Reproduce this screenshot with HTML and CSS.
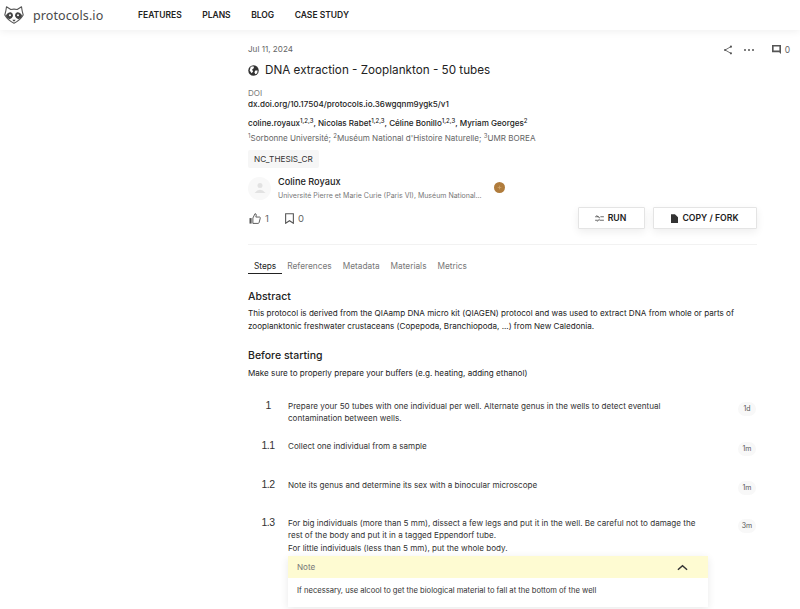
FILE: index.html
```html
<!DOCTYPE html>
<html lang="en">
<head>
    <meta charset="UTF-8">
    <meta name="viewport" content="width=device-width, initial-scale=1.0">
    <title>DNA extraction - Zooplankton - 50 tubes</title>
    <link rel="stylesheet" href="styles.css">
</head>
<body>
    <header class="topbar">
        <a class="brand">
            <svg class="brand-icon" viewBox="0 0 20 18" width="20" height="18">
                <path d="M2.500 .8 L6.800 3.500 Q10 2.800 13.200 3.500 L17.500 .8 Q18 5 19.200 9 Q16 14.500 10 17.200 Q4 14.500 .8 9 Q2 5 2.500 .8 Z" fill="#fff" stroke="#555" stroke-width="1.100" stroke-linejoin="round"/>
                <path d="M1.800 10 Q3.500 6 7 6.300 Q9.300 7.300 9 10 Q8 13 5.500 13.300 Q3 12.500 1.800 10 Z M18.200 10 Q16.500 6 13 6.300 Q10.700 7.300 11 10 Q12 13 14.500 13.300 Q17 12.500 18.200 10 Z" fill="#444"/>
                <path d="M8.300 13.800 H11.700 L10 15.800 Z" fill="#444"/>
                <circle cx="6" cy="9.300" r="1" fill="#fff"/>
                <circle cx="14" cy="9.300" r="1" fill="#fff"/>
            </svg>
            <span class="brand-name">protocols.io</span>
        </a>
        <nav class="nav">
            <a>FEATURES</a>
            <a>PLANS</a>
            <a>BLOG</a>
            <a>CASE STUDY</a>
        </nav>
    </header>

    <main class="page">
        <div class="date-row">
            <span class="date">Jul 11, 2024</span>
            <div class="actions">
                <svg viewBox="0 0 12 12" width="10" height="10"><path d="M9.500 2 L2.500 6 L9.500 10" fill="none" stroke="#555" stroke-width="1"/><circle cx="9.500" cy="2" r="1.300" fill="#555"/><circle cx="2.500" cy="6" r="1.300" fill="#555"/><circle cx="9.500" cy="10" r="1.300" fill="#555"/></svg>
                <span class="more">
                    <i></i><i></i><i></i>
                </span>
                <span class="comments">
                    <svg viewBox="0 0 10 10" width="9" height="9"><path d="M0 0 H10 V10 L8 8 H0 Z M1.800 1.800 V6.200 H8.200 V1.800 Z" fill="#555" fill-rule="evenodd"/></svg>
                    0
                </span>
            </div>
        </div>

        <h1 class="title">
            <svg viewBox="0 0 12 12" width="11" height="11"><circle cx="6" cy="6" r="5.700" fill="#333"/><path d="M3 2 L6 1.300 L6.500 3.300 L4.500 4.800 L5.500 7 L4 9 L1.800 6 Z M8 6 L10.500 6 L10 9 L8 10 L7 8 Z" fill="#fff"/></svg>
            DNA extraction - Zooplankton - 50 tubes
        </h1>

        <div class="doi-label">DOI</div>
        <div class="doi">dx.doi.org/10.17504/protocols.io.36wgqnm9ygk5/v1</div>
        <div class="authors">coline.royaux<sup>1,2,3</sup>, Nicolas Rabet<sup>1,2,3</sup>, Céline Bonillo<sup>1,2,3</sup>, Myriam Georges<sup>2</sup></div>
        <div class="affil"><sup>1</sup>Sorbonne Université; <sup>2</sup>Muséum National d'Histoire Naturelle; <sup>3</sup>UMR BOREA</div>

        <div class="tag">NC_THESIS_CR</div>

        <div class="creator">
            <div class="avatar">
                <svg viewBox="0 0 20 20" width="20" height="20"><circle cx="10" cy="7.500" r="2.500" fill="#e2e2e2"/><path d="M4.500 15 Q10 8.500 15.500 15 Z" fill="#e2e2e2"/></svg>
            </div>
            <div class="creator-text">
                <div class="creator-name">Coline Royaux</div>
                <div class="creator-org">Université Pierre et Marie Curie (Paris VI), Muséum National...</div>
            </div>
            <span class="medal">
                <svg viewBox="0 0 10 10" width="5" height="5"><path d="M5 0 L6.200 3.800 L10 5 L6.200 6.200 L5 10 L3.800 6.200 L0 5 L3.800 3.800 Z" fill="#cfa368"/></svg>
            </span>
        </div>

        <div class="stats-row">
            <div class="stats">
                <span class="stat">
                    <svg viewBox="0 0 14 13" width="12" height="11"><path d="M.5 6 H3 V12.500 H.5 Z" fill="#555"/><path d="M4.500 6 L7 .8 Q8.500 .8 8.500 2.500 L8 4.800 H12.500 Q13.500 5 13.200 6.200 L11.800 11.500 Q11.500 12.300 10.500 12.300 H4.500 Z" fill="none" stroke="#555" stroke-width="1.100"/></svg>
                    1
                </span>
                <span class="stat">
                    <svg viewBox="0 0 10 12" width="9" height="11"><path d="M.7 .7 H9.300 V11.300 L5 8.500 L.7 11.300 Z" fill="none" stroke="#555" stroke-width="1.200"/></svg>
                    0
                </span>
            </div>
            <div class="buttons">
                <button class="btn btn-run">
                    <svg viewBox="0 0 10 8" width="9" height="7"><path d="M0 2 H4 M6 2 H10 M0 6 H3 M5 6 H10 M1.500 .5 L5.500 3.500 M2.500 7.500 L5 4.500" fill="none" stroke="#444" stroke-width=".9"/></svg>
                    RUN
                </button>
                <button class="btn btn-copy">
                    <svg viewBox="0 0 8 10" width="7" height="9"><path d="M0 0 H4.500 L8 3.500 V10 H0 Z" fill="#333"/></svg>
                    COPY / FORK
                </button>
            </div>
        </div>

        <div class="tabs">
            <a class="tab active">Steps</a>
            <a class="tab">References</a>
            <a class="tab">Metadata</a>
            <a class="tab">Materials</a>
            <a class="tab">Metrics</a>
        </div>

        <h2 class="section-title">Abstract</h2>
        <p class="section-text">This protocol is derived from the QIAamp DNA micro kit (QIAGEN) protocol and was used to extract DNA from whole or parts of zooplanktonic freshwater crustaceans (Copepoda, Branchiopoda, ...) from New Caledonia.</p>

        <h2 class="section-title before">Before starting</h2>
        <p class="section-text">Make sure to properly prepare your buffers (e.g. heating, adding ethanol)</p>

        <div class="steps">
            <div class="step step-1">
                <span class="step-num">1</span>
                <div class="step-body">Prepare your 50 tubes with one individual per well. Alternate genus in the wells to detect eventual contamination between wells.</div>
                <span class="step-time">1d</span>
            </div>
            <div class="step step-11">
                <span class="step-num">1.1</span>
                <div class="step-body">Collect one individual from a sample</div>
                <span class="step-time">1m</span>
            </div>
            <div class="step step-12">
                <span class="step-num">1.2</span>
                <div class="step-body">Note its genus and determine its sex with a binocular microscope</div>
                <span class="step-time">1m</span>
            </div>
            <div class="step">
                <span class="step-num">1.3</span>
                <div class="step-body">
                    For big individuals (more than 5 mm), dissect a few legs and put it in the well. Be careful not to damage the rest of the body and put it in a tagged Eppendorf tube.<br>
                    For little individuals (less than 5 mm), put the whole body.
                    <div class="note">
                        <div class="note-head">
                            <span>Note</span>
                            <svg viewBox="0 0 12 7" width="11" height="7"><path d="M1 6 L6 1.500 L11 6" fill="none" stroke="#333" stroke-width="1.600"/></svg>
                        </div>
                        <div class="note-body">If necessary, use alcool to get the biological material to fall at the bottom of the well</div>
                    </div>
                </div>
                <span class="step-time">3m</span>
            </div>
        </div>
    </main>
</body>
</html>
```

FILE: styles.css
```css
html, body {
    height: 100%;
    overflow: hidden;
}
body {
    margin: 0;
    background: #fff;
    color: #222;
    font-family: Inter, "Liberation Sans", sans-serif;
}
sup {
    font-size: 6px;
    line-height: 0;
    vertical-align: 3px;
}
.topbar {
    display: flex;
    align-items: center;
    height: 30px;
    background: #fff;
    box-shadow: 0 1px 8px rgba(0, 0, 0, 0.07);
}
.brand {
    display: flex;
    align-items: center;
    width: 138px;
    padding-left: 4px;
    box-sizing: border-box;
}
.brand-icon {
    margin-right: 9px;
}
.brand-name {
    font-family: "Noto Sans", sans-serif;
    font-size: 12.500px;
    letter-spacing: 0.1px;
    color: #4a4a4a;
}
.nav {
    display: flex;
    gap: 20.500px;
    font-size: 8.500px;
    font-weight: 600;
    color: #222;
}
.page {
    width: 509px;
    margin-left: 248px;
}
.date-row {
    display: flex;
    justify-content: space-between;
    align-items: center;
    height: 14px;
    margin-top: 12px;
}
.date {
    font-size: 8.100px;
    color: #666;
}
.actions {
    display: flex;
    align-items: center;
    color: #666;
    font-size: 8.500px;
    margin-right: -33px;
    padding-top: 1px;
}
.more {
    display: flex;
    gap: 2px;
    margin-left: 11px;
}
.more i {
    width: 2px;
    height: 2px;
    border-radius: 50%;
    background: #555;
}
.comments {
    display: flex;
    align-items: center;
    gap: 4px;
    margin-left: 18px;
}
.title {
    display: flex;
    align-items: center;
    gap: 6px;
    margin: 4px 0 0;
    font-size: 11.700px;
    font-weight: 400;
    line-height: 20px;
    color: #222;
}
.doi-label {
    margin-top: 8px;
    font-size: 8.100px;
    line-height: 10px;
    color: #777;
}
.doi {
    font-size: 8.100px;
    font-weight: 500;
    line-height: 12px;
    color: #222;
}
.authors {
    margin-top: 6px;
    font-size: 8.100px;
    font-weight: 500;
    line-height: 14px;
}
.affil {
    margin-top: 2px;
    font-size: 8.100px;
    line-height: 13px;
    color: #666;
}
.tag {
    width: fit-content;
    margin-top: 5px;
    padding: 0 6px;
    background: #f6f6f6;
    border-radius: 2px;
    font-size: 8.200px;
    line-height: 18px;
    color: #333;
}
.creator {
    display: flex;
    align-items: center;
    margin-top: 7px;
}
.avatar {
    display: flex;
    justify-content: center;
    align-items: center;
    width: 23px;
    height: 23px;
    border-radius: 50%;
    background: #f8f8f8;
    margin-right: 7px;
}
.creator-text {
    width: 216px;
}
.creator-name {
    font-size: 9.200px;
    font-weight: 500;
    line-height: 14px;
    color: #222;
}
.creator-org {
    margin-top: 2px;
    font-size: 7px;
    line-height: 10px;
    color: #777;
    white-space: nowrap;
}
.medal {
    display: flex;
    justify-content: center;
    align-items: center;
    width: 11px;
    height: 11px;
    margin-bottom: 2px;
    border-radius: 50%;
    background: #b07c3c;
}
.stats-row {
    display: flex;
    justify-content: space-between;
    align-items: center;
    height: 30px;
    padding-bottom: 11px;
    margin-top: 2px;
    border-bottom: 1px solid #f2f2f2;
}
.stats {
    display: flex;
    gap: 16px;
    color: #666;
    font-size: 9.500px;
    padding-left: 1px;
}
.stat {
    display: flex;
    align-items: center;
    gap: 4px;
}
.buttons {
    display: flex;
    gap: 8px;
}
.btn {
    display: flex;
    justify-content: center;
    align-items: center;
    gap: 4px;
    height: 22px;
    padding: 0;
    background: #fff;
    border: 1px solid #e4e4e4;
    border-radius: 1px;
    box-shadow: 0 3px 8px rgba(0, 0, 0, 0.07);
    font-family: inherit;
    font-size: 8.700px;
    font-weight: 600;
    color: #222;
}
.btn-run {
    width: 67px;
    padding-right: 2px;
}
.btn-copy {
    width: 104px;
}
.tabs {
    display: flex;
    gap: 11px;
    margin-top: 14px;
    font-size: 8.300px;
    color: #777;
}
.tab {
    line-height: 14px;
}
.tab.active {
    padding: 0 6px;
    margin-right: -6px;
    color: #222;
    border-bottom: 1px solid #222;
}
.section-title {
    margin: 15px 0 0;
    font-size: 10.500px;
    font-weight: 500;
    line-height: 16px;
    color: #222;
}
.section-title.before {
    margin-top: 16px;
}
.section-text {
    margin: 2px 0 0;
    font-size: 8.100px;
    line-height: 12.500px;
    color: #222;
}
.before + .section-text {
    margin-top: 3px;
}
.steps {
    margin-top: 20px;
}
.step {
    display: flex;
    align-items: flex-start;
}
.step-1 {
    padding-bottom: 15px;
}
.step-11 {
    padding-bottom: 23px;
}
.step-12 {
    padding-bottom: 22px;
}
.step-num {
    width: 40px;
    margin-top: -2px;
    text-align: center;
    font-family: "Liberation Sans", sans-serif;
    font-size: 10.500px;
    letter-spacing: -0.6px;
    line-height: 14px;
    color: #333;
}
.step-body {
    width: 420px;
    font-size: 8.100px;
    line-height: 12.500px;
    color: #333;
}
.step-time {
    width: 18px;
    height: 14px;
    margin: 2px 0 0 30px;
    border-radius: 7px;
    background: #f8f8f8;
    text-align: center;
    font-size: 7px;
    line-height: 14px;
    color: #555;
}
.note {
    margin-top: 2px;
    box-shadow: 0 2px 8px rgba(0, 0, 0, 0.09);
}
.note-head {
    display: flex;
    justify-content: space-between;
    align-items: center;
    height: 22px;
    padding: 0 20px 0 9px;
    background: #fefbd2;
    color: #777;
}
.note-body {
    padding: 7px 9px 9px;
    font-size: 7.600px;
    color: #333;
}
```
